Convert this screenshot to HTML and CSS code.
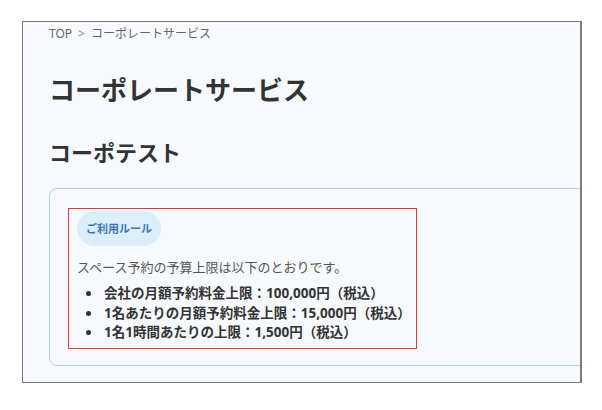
FILE: index.html
```html
<!DOCTYPE html>
<html lang="ja">
<head>
<meta charset="utf-8">
<link rel="stylesheet" href="styles.css">
</head>
<body>
<div class="frame">
  <div class="page">
    <nav class="crumbs"><span>TOP</span><span class="sep">&gt;</span><span>コーポレートサービス</span></nav>
    <h1 class="title">コーポレートサービス</h1>
    <h2 class="subtitle">コーポテスト</h2>
    <section class="card">
      <div class="rules">
        <span class="pill">ご利用ルール</span>
        <p class="lead">スペース予約の予算上限は以下のとおりです。</p>
        <ul class="limits">
          <li>会社の月額予約料金上限：100,000円（税込）</li>
          <li>1名あたりの月額予約料金上限：15,000円（税込）</li>
          <li>1名1時間あたりの上限：1,500円（税込）</li>
        </ul>
      </div>
    </section>
  </div>
</div>
</body>
</html>
```

FILE: styles.css
```css
html, body {
  margin: 0;
  padding: 0;
  background: #ffffff;
}
body {
  font-family: "Noto Sans", "Noto Sans CJK JP", sans-serif;
  color: #333;
}
.frame {
  margin: 21px 0 0 22px;
  width: 557px;
  height: 360px;
  border: 1px solid #7b7b7b;
  border-right-width: 2px;
  background: #f6faff;
  overflow: hidden;
}
.page {
  padding: 4px 0 0 26px;
}
.crumbs {
  display: flex;
  gap: 6px;
  font-size: 12px;
  line-height: 16px;
  color: #666;
}
.crumbs .sep {
  color: #888;
}
.title {
  margin: 30px 0 0;
  font-size: 26px;
  line-height: 36px;
  font-weight: 700;
  color: #333;
}
.subtitle {
  margin: 29px 0 0;
  font-size: 22px;
  line-height: 31px;
  font-weight: 700;
  color: #333;
}
.card {
  margin-top: 20px;
  width: 620px;
  padding: 19px 18px 16px;
  border: 1px solid #a9d4f5;
  border-radius: 8px;
  box-sizing: border-box;
}
.rules {
  width: 349px;
  box-sizing: border-box;
  border: 1px solid #e53935;
  padding: 2px 8px 5px;
}
.pill {
  display: inline-block;
  padding: 10px 9px;
  font-size: 11px;
  line-height: 15px;
  font-weight: 700;
  color: #3a78b5;
  background: #dcedfc;
  border-radius: 18px;
}
.lead {
  margin: 11px 0 0;
  font-size: 13px;
  line-height: 20px;
  color: #555;
}
.limits {
  margin: 7px 0 0;
  padding: 0;
  list-style: none;
  font-size: 13.5px;
  line-height: 19.5px;
  font-weight: 700;
  color: #333;
}
.limits li {
  display: flex;
  align-items: center;
  white-space: nowrap;
}
.limits li::before {
  content: "";
  flex: none;
  width: 5px;
  height: 5px;
  border-radius: 50%;
  background: #333;
  margin: 0 13px 0 9px;
}
```
